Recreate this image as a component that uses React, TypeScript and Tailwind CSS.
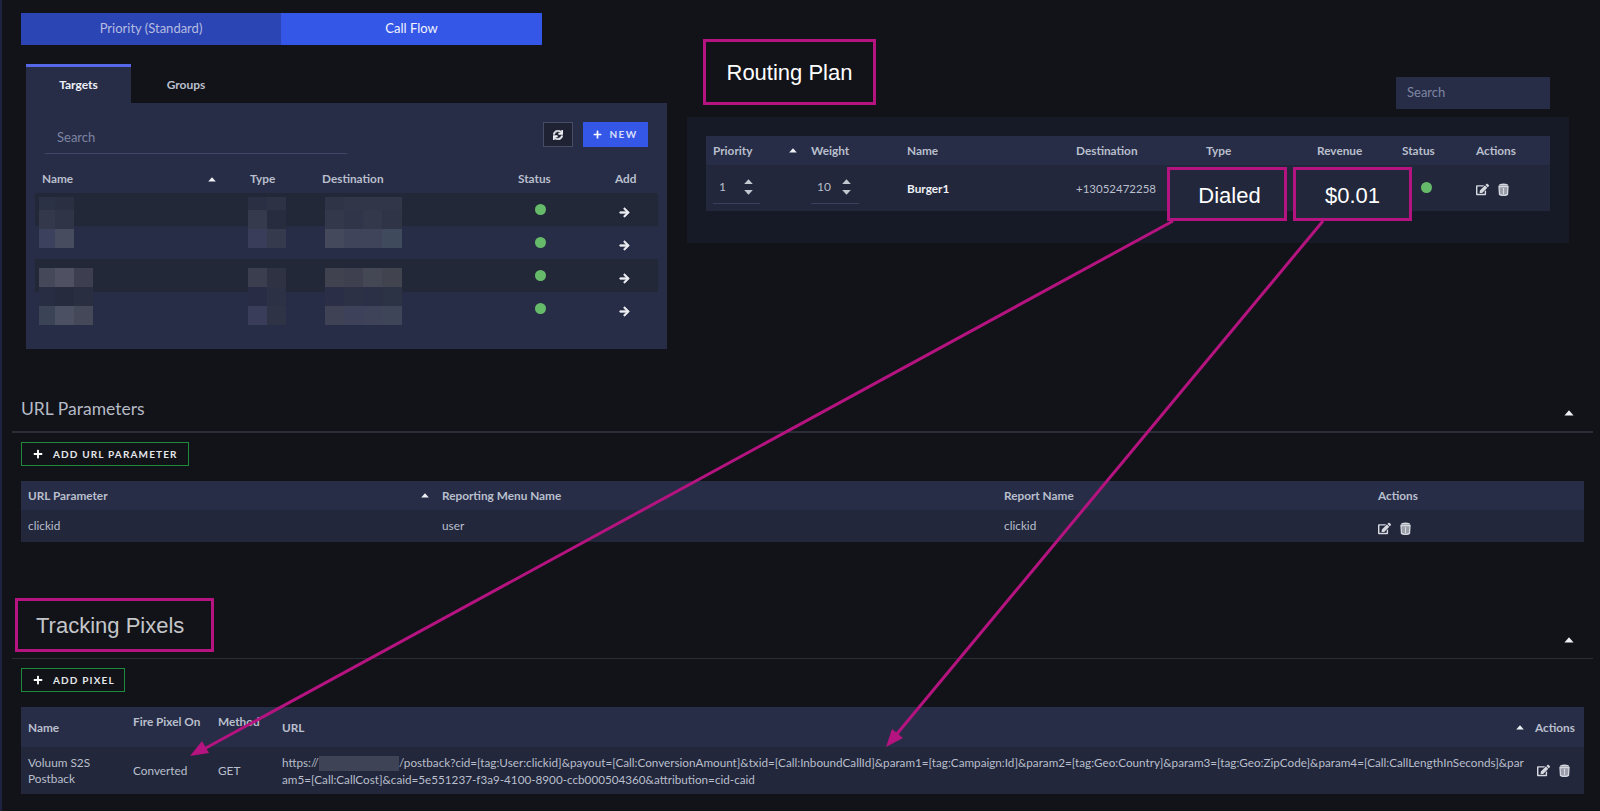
import { FaArrowRight, FaEdit, FaPlus, FaSync } from "react-icons/fa";

const mosaicRows = "grid-rows-[13px_19px_19px_20px_19px_19px_19px]";

const nameCells = [
    "bg-[#2c3245]", "bg-[#2a2f42]", "",
    "bg-[#33384a]", "bg-[#2f3446]", "",
    "bg-[#3c415e]", "bg-[#484c5f]", "",
    "", "", "",
    "bg-[#444858]", "bg-[#4f5162]", "bg-[#3d3f50]",
    "bg-[#282d43]", "bg-[#262b3d]", "bg-[#292e40]",
    "bg-[#3b4457]", "bg-[#4b5063]", "bg-[#444858]",
];

const typeCells = [
    "bg-[#2a2f43]", "bg-[#2d3245]",
    "bg-[#353a4c]", "bg-[#282c3f]",
    "bg-[#3a3d5a]", "bg-[#353a4c]",
    "", "",
    "bg-[#3a3e4e]", "bg-[#2f3243]",
    "bg-[#282d45]", "bg-[#2c3145]",
    "bg-[#3a3d5a]", "bg-[#2f3346]",
];

const destCells = [
    "bg-[#2f3447]", "bg-[#323649]", "bg-[#323649]", "bg-[#323649]",
    "bg-[#33384a]", "bg-[#303549]", "bg-[#34384b]", "bg-[#2f3447]",
    "bg-[#45495c]", "bg-[#40445a]", "bg-[#40445a]", "bg-[#3f4a5c]",
    "", "", "", "",
    "bg-[#40424f]", "bg-[#3f404f]", "bg-[#444754]", "bg-[#41434f]",
    "bg-[#2a2f47]", "bg-[#2c3146]", "bg-[#2b3047]", "bg-[#2c3345]",
    "bg-[#3e4254]", "bg-[#3d415a]", "bg-[#3f4359]", "bg-[#3e4558]",
];

function SortUp({ className = "" }: { className?: string }) {
    return (
        <svg width="8" height="5" viewBox="0 0 8 5" className={className}>
            <path d="M4 0.3 L7.8 4.6 H0.2 Z" fill="#eef0f4" />
        </svg>
    );
}

function TrashIcon() {
    return (
        <svg width="11" height="13" viewBox="0 0 11 13">
            <path d="M1.5 1.2 Q5.5 -0.4 9.5 1.2 L10.5 2.8 H0.5 Z" fill="#d5d8de" />
            <path d="M1 3.6 H10 L9.5 11.4 Q5.5 13.6 1.5 11.4 Z" fill="#9a9ea8" stroke="#d5d8de" strokeWidth="1.3" />
            <path d="M5.5 5 V11.2" stroke="#d5d8de" strokeWidth="1.1" />
        </svg>
    );
}

function Spinner({ value, width }: { value: string; width: string }) {
    return (
        <div className={`${width} h-[39px] border-b border-[#3a4060] flex items-center pl-[6px] pt-[5px]`}>
            <span className="w-[25px] text-[12px] text-[#b9bfcc]">{value}</span>
            <div className="flex flex-col gap-[6px]">
                <svg width="9" height="5" viewBox="0 0 9 5"><path d="M4.5 0.3 L8.8 5 H0.2 Z" fill="#c4c8d0" /></svg>
                <svg width="9" height="5" viewBox="0 0 9 5"><path d="M4.5 4.7 L8.8 0 H0.2 Z" fill="#c4c8d0" /></svg>
            </div>
        </div>
    );
}

function RowActions() {
    return (
        <div className="flex items-center gap-[9px] text-[#d5d8de]">
            <FaEdit className="w-[13px] h-[13px]" />
            <TrashIcon />
        </div>
    );
}

function AddButton({ label, width }: { label: string; width: string }) {
    return (
        <button className={`${width} ml-[21px] mt-[9px] h-[24px] border border-[#1f8a3a] flex items-center pl-[11px] gap-[10px] whitespace-nowrap text-[#e4e6ea] text-[10px] font-bold tracking-[1.15px]`}>
            <FaPlus className="w-[10px] h-[10px] text-white" />
            {label}
        </button>
    );
}

function TargetRow({ dark }: { dark: boolean }) {
    return (
        <div className={`ml-[9px] w-[623px] h-[33px] flex items-center ${dark ? "bg-[#232838]" : ""}`}>
            <div className="w-[500px] shrink-0" />
            <div className="w-[11px] h-[11px] rounded-full bg-[#66bb6a]" />
            <FaArrowRight className="ml-[73px] mt-[6px] w-[11px] h-[11px] text-[#eceef2] stroke-current stroke-[30px]" />
        </div>
    );
}

function Mosaic({ cells, cols, className }: { cells: string[]; cols: string; className: string }) {
    return (
        <div className={`absolute top-[94px] grid ${cols} ${mosaicRows} ${className}`}>
            {cells.map((c, i) => (
                <div key={i} className={c} />
            ))}
        </div>
    );
}

function SectionHeader({ children, tall }: { children: React.ReactNode; tall?: boolean }) {
    return (
        <div className={`ml-3 w-[1581px] flex justify-between pr-[19px] border-[#2a2c38] ${tall ? "h-[61px] border-b" : "h-[38px] border-b-2 pl-[9px] items-center"}`}>
            {children}
        </div>
    );
}

export default function App() {
    return (
        <div className="relative w-[1600px] h-[811px] overflow-hidden bg-[#121319] font-['Lato',sans-serif] text-[11.8px] text-[#b9bfcc]">
            <div className="absolute left-0 top-0 w-[2px] h-full bg-[#1e2340]" />

            <div className="flex h-[395px]">
                <div className="w-[687px] shrink-0">
                    <div className="ml-[21px] mt-[13px] w-[521px] h-[32px] flex text-[13px]">
                        <div className="w-[260px] flex items-center justify-center bg-[#2c45b5] text-[#b4bce0]">Priority (Standard)</div>
                        <div className="flex-1 flex items-center justify-center bg-[#3557e8] text-[#f2f4fc]">Call Flow</div>
                    </div>

                    <div className="ml-[26px] mt-[19px] flex text-[12px]">
                        <div className="w-[105px] h-[39px] border-t-[3px] border-[#5468e8] bg-[#272d47] flex items-center justify-center font-bold text-[#eef0f5] pb-[1px]">Targets</div>
                        <div className="w-[110px] pt-[3px] flex items-center justify-center text-[#b9bfcc] font-bold">Groups</div>
                    </div>

                    <div className="relative ml-[26px] w-[641px] h-[246px] bg-[#272d47]">
                        <div className="flex pt-[19px] pr-[19px]">
                            <div className="ml-[19px] w-[302px] h-[32px] border-b border-[#3f4766] pl-[12px] flex items-center text-[13px] text-[#7d85a3]">Search</div>
                            <div className="ml-auto w-[30px] h-[25px] border border-[#454c63] bg-[#1e2233] flex items-center justify-center">
                                <FaSync className="w-[10px] h-[10px] text-[#eceef2] stroke-current stroke-[30px]" />
                            </div>
                            <div className="ml-[10px] w-[65px] h-[25px] bg-[#3557e8] flex items-center justify-center gap-[7px] text-[#d9dffa] text-[10px] font-bold tracking-[1.4px]">
                                <FaPlus className="w-[9px] h-[9px] text-white" />
                                NEW
                            </div>
                        </div>
                        <div className="mt-[11px] h-[28px] flex items-center pl-[16px] text-[11.8px] font-bold">
                            <div className="w-[208px] flex items-center justify-between pr-[34px]">
                                Name
                                <SortUp />
                            </div>
                            <div className="w-[72px]">Type</div>
                            <div className="w-[196px]">Destination</div>
                            <div className="w-[97px]">Status</div>
                            <div>Add</div>
                        </div>
                        <TargetRow dark />
                        <TargetRow dark={false} />
                        <TargetRow dark />
                        <TargetRow dark={false} />

                        <Mosaic cells={nameCells} cols="grid-cols-[16px_19px_19px]" className="left-[13px]" />
                        <Mosaic cells={typeCells} cols="grid-cols-[19px_19px]" className="left-[222px]" />
                        <Mosaic cells={destCells} cols="grid-cols-[19px_19px_19px_20px]" className="left-[299px]" />
                    </div>
                </div>

                <div className="w-[882px] shrink-0">
                    <div className="h-[117px] flex">
                        <div className="ml-[16px] mt-[39px] w-[173px] h-[66px] border-[3px] border-[#b5137f] flex items-center justify-center font-['Liberation_Sans',Arial,sans-serif] text-[22px] text-white">Routing Plan</div>
                        <div className="ml-auto mr-[19px] mt-[77px] w-[154px] h-[32px] bg-[#272d47] flex items-center pl-[11px] text-[13px] text-[#7d85a3]">Search</div>
                    </div>
                    <div className="h-[126px] bg-[#161a26] pt-[19px] px-[19px]">
                        <div className="h-[29px] bg-[#272d47] flex items-center pl-[7px] text-[11.8px] font-bold">
                            <div className="w-[98px] flex items-center justify-between pr-[14px]">
                                Priority
                                <SortUp />
                            </div>
                            <div className="w-[96px]">Weight</div>
                            <div className="w-[169px]">Name</div>
                            <div className="w-[130px]">Destination</div>
                            <div className="w-[111px]">Type</div>
                            <div className="w-[85px]">Revenue</div>
                            <div className="w-[74px]">Status</div>
                            <div>Actions</div>
                        </div>
                        <div className="relative h-[46px] bg-[#22273b] flex items-start pl-[7px]">
                            <div className="w-[98px]"><Spinner value="1" width="w-[47px]" /></div>
                            <div className="w-[96px]"><Spinner value="10" width="w-[48px]" /></div>
                            <div className="w-[169px] h-[46px] pt-[1px] flex items-center font-bold text-[#eef0f5]">Burger1</div>
                            <div className="h-[46px] pt-[1px] flex items-center text-[11.5px]">+13052472258</div>
                            <div className="absolute left-[715px] top-[17px] w-[11px] h-[11px] rounded-full bg-[#66bb6a]" />
                            <div className="absolute left-[770px] top-[18px]"><RowActions /></div>
                            <div className="absolute left-[461px] top-[2px] w-[120px] h-[54px] pt-[3px] pl-[5px] border-[3px] border-[#b5137f] bg-[#22273b] flex items-center justify-center font-['Liberation_Sans',Arial,sans-serif] text-[22px] text-white">Dialed</div>
                            <div className="absolute left-[587px] top-[2px] w-[119px] h-[54px] pt-[3px] border-[3px] border-[#b5137f] bg-[#22273b] flex items-center justify-center font-['Liberation_Sans',Arial,sans-serif] text-[22px] text-white">$0.01</div>
                        </div>
                    </div>
                </div>
            </div>

            <SectionHeader>
                <span className="text-[17.5px] text-[#b5bac5] mb-[8px]">URL Parameters</span>
                <SortUp className="w-[10px] h-[6px]" />
            </SectionHeader>
            <AddButton label="ADD URL PARAMETER" width="w-[168px]" />
            <div className="ml-[21px] mt-[15px] w-[1563px]">
                <div className="h-[29px] bg-[#272d47] flex items-center pl-[7px] text-[11.8px] font-bold">
                    <div className="w-[414px] flex items-center justify-between pr-[13px]">
                        URL Parameter
                        <SortUp />
                    </div>
                    <div className="w-[562px]">Reporting Menu Name</div>
                    <div className="w-[374px]">Report Name</div>
                    <div>Actions</div>
                </div>
                <div className="h-[32px] bg-[#22273b] flex items-center pl-[7px]">
                    <div className="w-[414px]">clickid</div>
                    <div className="w-[562px]">user</div>
                    <div className="w-[374px]">clickid</div>
                    <div className="mt-[4px]"><RowActions /></div>
                </div>
            </div>

            <div className="mt-[56px]">
                <SectionHeader tall>
                    <div className="ml-[3px] w-[199px] h-[54px] border-[3px] border-[#b5137f] flex items-center pl-[18px] font-['Liberation_Sans',Arial,sans-serif] text-[22px] text-[#c4c6ca]">Tracking Pixels</div>
                    <SortUp className="w-[10px] h-[6px] self-end mb-[15px]" />
                </SectionHeader>
            </div>
            <AddButton label="ADD PIXEL" width="w-[104px]" />
            <div className="ml-[21px] mt-[15px] w-[1563px]">
                <div className="h-[40px] bg-[#272d47] flex pl-[7px] text-[11.8px] font-bold">
                    <div className="w-[105px] pt-[12px]">Name</div>
                    <div className="w-[85px] pt-[6px]">Fire Pixel On</div>
                    <div className="w-[64px] pt-[6px]">Method</div>
                    <div className="w-[1234px] pt-[12px]">URL</div>
                    <SortUp className="mt-[18px] mr-[11px]" />
                    <div className="pt-[12px]">Actions</div>
                </div>
                <div className="h-[47px] bg-[#22273b] flex items-center pl-[7px]">
                    <div className="w-[105px] leading-[16px]">Voluum S2S<br />Postback</div>
                    <div className="w-[85px] pt-[1px]">Converted</div>
                    <div className="w-[64px] pt-[1px]">GET</div>
                    <div className="w-[1255px] leading-[16px] text-[11.7px] whitespace-nowrap">
                        https://<span className="inline-block align-middle w-[80px] h-[15px] bg-[#3f4356]" />/postback?cid=[tag:User:clickid]&amp;payout=[Call:ConversionAmount]&amp;txid=[Call:InboundCallId]&amp;param1=[tag:Campaign:Id]&amp;param2=[tag:Geo:Country]&amp;param3=[tag:Geo:ZipCode]&amp;param4=[Call:CallLengthInSeconds]&amp;par<br />
                        am5=[Call:CallCost]&amp;caid=5e551237-f3a9-4100-8900-ccb000504360&amp;attribution=cid-caid
                    </div>
                    <RowActions />
                </div>
            </div>

            <svg className="absolute left-0 top-0 pointer-events-none" width="1600" height="811">
                <line x1="1173" y1="221" x2="204" y2="749" stroke="#b5137f" strokeWidth="3" />
                <polygon points="190,756 209,753 202,741" fill="#b5137f" />
                <line x1="1323" y1="221" x2="896" y2="735" stroke="#b5137f" strokeWidth="3" />
                <polygon points="886,747 903,738 892,729" fill="#b5137f" />
            </svg>
        </div>
    );
}
